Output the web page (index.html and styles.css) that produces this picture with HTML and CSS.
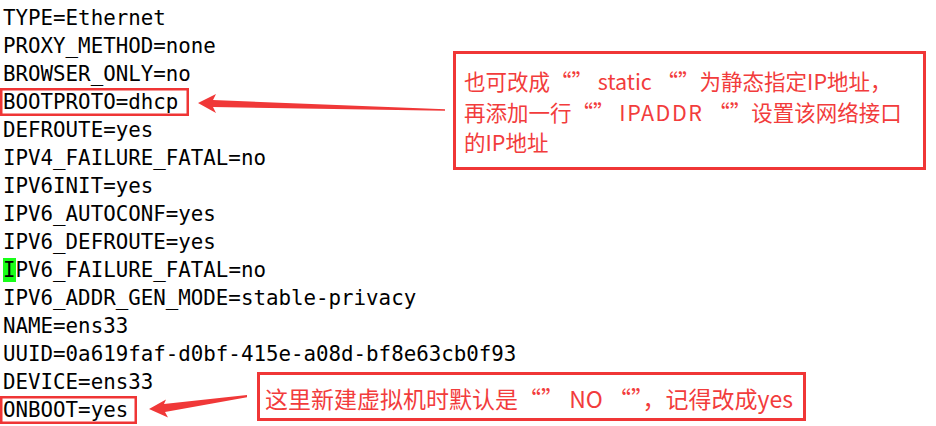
FILE: index.html
```html
<!DOCTYPE html>
<html>
<head>
<meta charset="utf-8">
<link rel="stylesheet" href="styles.css">
</head>
<body>
<div class="page">
<pre class="config">TYPE=Ethernet
PROXY_METHOD=none
BROWSER_ONLY=no
<span class="hl">BOOTPROTO=dhcp</span>
DEFROUTE=yes
IPV4_FAILURE_FATAL=no
IPV6INIT=yes
IPV6_AUTOCONF=yes
IPV6_DEFROUTE=yes
<span class="cursor">I</span>PV6_FAILURE_FATAL=no
IPV6_ADDR_GEN_MODE=stable-privacy
NAME=ens33
UUID=0a619faf-d0bf-415e-a08d-bf8e63cb0f93
DEVICE=ens33
<span class="hl hl-short">ONBOOT=yes</span></pre>

<div class="note note-top">也可改成“” static “”为静态指定IP地址，<br>再添加一行“” <span class="wide">IPADDR</span> “”设置该网络接口<br>的IP地址</div>
<div class="note note-bottom">这里新建虚拟机时默认是“” NO “”，记得改成yes</div>

<svg class="arrows" width="936" height="426" viewBox="0 0 936 426">
  <polygon class="arrow" points="198,103 216,94 213,100 445,109.3 445,110.7 213,107 216,113"/>
  <polygon class="arrow" points="149,409 166,399.5 164,404 247,395 247,397.2 165,412 168,417.5"/>
</svg>
</div>
</body>
</html>
```

FILE: styles.css
```css
html, body {
  margin: 0;
  padding: 0;
  background: #ffffff;
}

.page {
  position: relative;
  width: 936px;
  height: 426px;
  overflow: hidden;
}

.config {
  width: fit-content;
  margin: 0;
  padding: 4px 0 0 3px;
  font-family: "DejaVu Sans Mono", "Liberation Mono", monospace;
  font-size: 20.8px;
  line-height: 28px;
  color: #000000;
}

.hl {
  display: inline-block;
  margin-left: -3px;
  padding: 0 11px 0 3px;
  line-height: 28px;
  box-shadow: inset 0 0 0 2.5px #ef3535;
}

.hl-short {
  padding-right: 9px;
}

.cursor {
  background: #19ff19;
}

.note {
  position: absolute;
  box-sizing: border-box;
  border: 3px solid #f03636;
  background: #ffffff;
  color: #f23c3c;
  font-family: "Noto Sans CJK SC", "Noto Sans", sans-serif;
}

.note-top {
  left: 453px;
  top: 51px;
  width: 473px;
  height: 119px;
  padding: 12px 0 0 8px;
  font-size: 21.5px;
  line-height: 30.5px;
}

.wide {
  letter-spacing: 1.5px;
}

.note-bottom {
  left: 257px;
  top: 372px;
  width: 549px;
  height: 49px;
  padding: 8px 0 0 5px;
  font-size: 23px;
  line-height: 30px;
  white-space: nowrap;
}

.arrows {
  position: absolute;
  left: 0;
  top: 0;
}

.arrow {
  fill: #f03838;
}
```
